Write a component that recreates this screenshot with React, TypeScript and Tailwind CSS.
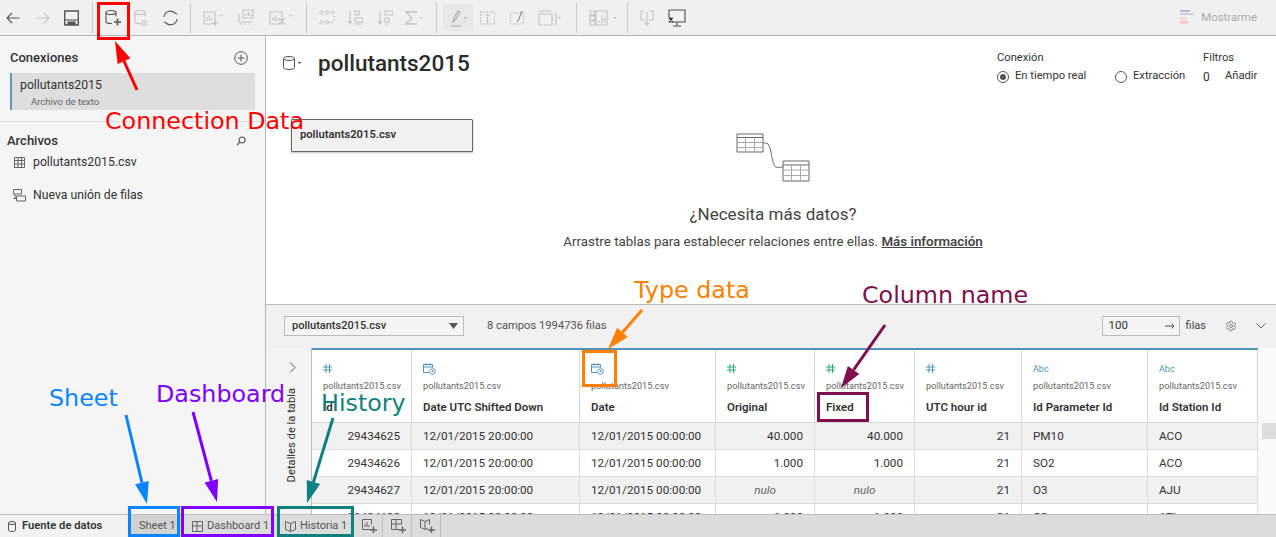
import { Settings } from "lucide-react";

const S = "#555555";
const L = "#c4c4c4";

function Ico({ w, ml, children, c = L }: { w: number; ml: string; children: React.ReactNode; c?: string }) {
  return (
    <div className={ml + " shrink-0"}>
      <svg width={w} height="20" viewBox={`0 0 ${w} 20`} fill="none" stroke={c} strokeWidth="1.1">
        {children}
      </svg>
    </div>
  );
}

function Db({ c = S }: { c?: string }) {
  return (
    <g stroke={c}>
      <ellipse cx="6" cy="4.500" rx="5" ry="2" />
      <path d="M1 4.500v9c0 1.200 2 2 5 2h1M11 4.500v4" />
    </g>
  );
}

function Toolbar() {
  return (
    <div className="h-[36px] shrink-0 flex items-center bg-[#f0f0f0] border-b border-[#b5b5b5]">
      <Ico w={14} ml="ml-[6px]" c={S}><path d="M13.500 10H1M6 5l-5 5 5 5" /></Ico>
      <Ico w={14} ml="ml-[16px]"><path d="M0.500 10H13M8 5l5 5-5 5" /></Ico>
      <Ico w={15} ml="ml-[14px]" c={S}>
        <path d="M.7 3h13.600v14H.700z" strokeWidth="1.400" /><path d="M1 12h13" /><path d="M4 17v-3h7v3" fill={S} />
      </Ico>
      <div className="w-px h-[30px] bg-[#c8c8c8] ml-[13px]" />
      <Ico w={16} ml="ml-[12px]">
        <Db /><path d="M9 14h7M12.500 10.500v7" stroke={S} strokeWidth="1.600" />
      </Ico>
      <Ico w={13} ml="ml-[13px]">
        <Db c={L} /><path d="M8.500 12v6M11.500 12v6" strokeWidth="1.500" />
      </Ico>
      <Ico w={15} ml="ml-[16px]" c={S}>
        <path d="M1 9a6.500 6.500 0 0 1 11-4l2 1M14 11a6.500 6.500 0 0 1-11 4l-2-1" />
      </Ico>
      <div className="w-px h-[30px] bg-[#c8c8c8] ml-[12px]" />
      <Ico w={20} ml="ml-[12px]">
        <path d="M1 4h11v12H1zM4 13V9M6.500 13V7M9 13v-3M9 15h7M12.500 11.500v7" />
        <path d="M17 7h3l-1.500 2z" fill={L} stroke="none" />
      </Ico>
      <Ico w={16} ml="ml-[15px]">
        <path d="M5 2h10v8H5zM1 6v8h14M8 8V5M10.500 8V4M13 8V6M2 16h2M6 16h2M10 16h2" />
      </Ico>
      <Ico w={24} ml="ml-[15px]">
        <path d="M1 4h12v12H1zM4 13V9M6.500 13V7M9 13v-3M10 10l6 6M16 10l-6 6" />
        <path d="M20 7h3l-1.500 2z" fill={L} stroke="none" />
      </Ico>
      <div className="w-px h-[30px] bg-[#c8c8c8] ml-[13px]" />
      <Ico w={16} ml="ml-[12px]">
        <path d="M1 3h3v3H1zM7 3h3v3H7zM12 3h3v3h-3zM1 13h3v3H1zM7 13h3v3H7zM15 8a5 5 0 0 1-3 7" strokeDasharray="2 1" />
      </Ico>
      <Ico w={16} ml="ml-[12px]">
        <path d="M3 3v13M1 13l2 3 2-3M8 3h4v4H8zM8 10h8v4H8zM8 16h8" />
      </Ico>
      <Ico w={16} ml="ml-[14px]">
        <path d="M3 3v13M1 13l2 3 2-3M8 3h8v4H8zM8 10h4v4H8zM8 16h3" />
      </Ico>
      <Ico w={18} ml="ml-[12px]">
        <path d="M12 4H1l6 6-6 6h11" strokeWidth="1.300" /><path d="M15 9h3l-1.500 2z" fill={L} stroke="none" />
      </Ico>
      <div className="w-px h-[30px] bg-[#c8c8c8] ml-[13px]" />
      <div className="ml-[6px] w-[30px] h-[27px] bg-[#e8e8e8] flex items-center pl-[7px]">
        <svg width="20" height="20" viewBox="0 0 20 20" fill="none" stroke="#aaa" strokeWidth="1.100">
          <path d="M3 14l1-4 4-7 2 1-4 7zM1 18h10" />
          <path d="M14 9h3l-1.500 2z" fill="#aaa" stroke="none" />
        </svg>
      </div>
      <Ico w={15} ml="ml-[7px]">
        <path d="M.5 4h14v12H.500z" strokeDasharray="2 1" /><path d="M5 7h5M7.500 7v7M6 14h3" />
      </Ico>
      <Ico w={14} ml="ml-[15px]">
        <path d="M.5 5h13v11H.500z" strokeDasharray="2 1" /><path d="M7 14l2-3 3-8" stroke="#888" />
      </Ico>
      <Ico w={24} ml="ml-[14px]">
        <path d="M1 3h13M1 6h13v11H1zM17 6h1M18 6v11M17 17h1" /><path d="M20 9h3l-1.500 2z" fill={L} stroke="none" />
      </Ico>
      <div className="w-px h-[30px] bg-[#c8c8c8] ml-[14px]" />
      <Ico w={28} ml="ml-[12px]">
        <path d="M1 3h5v4H1zM1 8h5v4H1zM1 13h5v4H1zM7 3h11v14H7zM10 15v-2M13 15V7M15.500 15v-5" />
        <path d="M24 9h4l-2 2z" fill={L} stroke="none" />
      </Ico>
      <div className="w-px h-[30px] bg-[#c8c8c8] ml-[10px]" />
      <Ico w={14} ml="ml-[12px]">
        <path d="M4 3H1v9h4M10 3h3v9h-4M7 4v13M4.500 14.500L7 17l2.500-2.500" />
      </Ico>
      <Ico w={18} ml="ml-[14px]" c={S}>
        <path d="M1 2h16v12H1M9 14v4M5 18h8M1 2v8" strokeWidth="1.200" /><path d="M1 10l4 4M1 10.500l4-.5M1 14l3-3" stroke="#222" />
      </Ico>
      <div className="ml-auto flex items-center mr-[19px]">
        <svg width="14" height="15" viewBox="0 0 14 15">
          <rect x="0" y="0" width="10" height="2" fill="#b9b6cf" />
          <rect x="0" y="3" width="14" height="2" fill="#c9d3e6" />
          <rect x="0" y="7" width="7" height="3" fill="#f3d9c6" />
          <rect x="0" y="11" width="8" height="3" fill="#f3c9c9" />
        </svg>
        <span className="ml-[7px] text-[11.4px] text-[#ababab]">Mostrarme</span>
      </div>
    </div>
  );
}

function Sidebar() {
  return (
    <aside className="w-[266px] shrink-0 bg-[#f5f5f5] border-r border-[#b5b5b5] flex flex-col">
      <div className="h-[86px] pl-[10px] pr-[10px] border-b border-[#dddddd]">
        <div className="h-[37px] pt-[7px] flex items-center justify-between pr-[7px]">
          <span className="text-[13px] font-medium text-[#333]">Conexiones</span>
          <svg width="14" height="14" viewBox="0 0 14 14" fill="none" stroke={S}>
            <circle cx="7" cy="7" r="6.300" />
            <path d="M3.500 7h7M7 3.500v7" />
          </svg>
        </div>
        <div className="h-[37px] bg-[#dedede] border-l-2 border-[#5a9bbd] pl-[8px] pt-[4px]">
          <div className="text-[12.25px] leading-[16px] text-[#333]">pollutants2015</div>
          <div className="text-[9.5px] leading-[14px] mt-[2px] pl-[11px] text-[#666]">Archivo de texto</div>
        </div>
      </div>
      <div className="h-[30px] pl-[7px] pr-[19px] pt-[8px] flex justify-between items-center">
        <span className="text-[13px] font-medium text-[#333]">Archivos</span>
        <svg width="10" height="10" viewBox="0 0 10 10" fill="none" stroke={S} strokeWidth="1.200">
          <circle cx="6" cy="4" r="3" /><path d="M3.800 6.200L1 9" />
        </svg>
      </div>
      <div className="h-[20px] pl-[14px] flex items-center gap-[8px]">
        <svg width="11" height="11" viewBox="0 0 11 11" fill="none" stroke="#666">
          <path d="M.5.500h10v10H.500zM.5 3.500h10M.5 7h10M4 .5v10M7.500 .5v10" />
        </svg>
        <span className="text-[12.25px] text-[#333]">pollutants2015.csv</span>
      </div>
      <div className="mt-[13px] h-[20px] pl-[13px] flex items-center gap-[7px]">
        <svg width="13" height="13" viewBox="0 0 13 13" fill="none" stroke="#666">
          <path d="M.5.500h8v4.500h-8zM3.500 7h9v5h-9zM.5 9.500h3M2 5v4.500" />
        </svg>
        <span className="text-[12.25px] text-[#333]">Nueva unión de filas</span>
      </div>
    </aside>
  );
}

function Canvas() {
  return (
    <div className="h-[268px] shrink-0 relative bg-white flex flex-col">
      <div className="flex items-start">
        <div className="ml-[16px] mt-[12px] flex items-center">
          <svg width="20" height="16" viewBox="0 0 20 16" fill="none" stroke={S}>
            <ellipse cx="7" cy="3.500" rx="5.500" ry="2" />
            <path d="M1.500 3.500v9c0 1 2.500 2 5.500 2s5.500-1 5.500-2v-9" />
            <path d="M15.500 7h4l-2 2z" fill={S} stroke="none" />
          </svg>
          <span className="ml-[16px] text-[22.5px] font-medium text-[#2b2b2b] leading-[30px]">pollutants2015</span>
        </div>
        <div className="ml-auto mt-[14px] flex">
          <div className="w-[206px] text-[11.2px] text-[#333]">
            <div className="h-[15px] leading-[15px]">Conexión</div>
            <div className="mt-[4px] flex items-center h-[15px]">
              <span className="w-[12px] h-[12px] rounded-full border border-[#555] flex items-center justify-center">
                <span className="w-[6px] h-[6px] rounded-full bg-[#555]" />
              </span>
              <span className="ml-[6px] w-[100px]">En tiempo real</span>
              <span className="w-[12px] h-[12px] rounded-full border border-[#555]" />
              <span className="ml-[6px]">Extracción</span>
            </div>
          </div>
          <div className="w-[73px] text-[11.2px] text-[#333]">
            <div className="h-[15px] leading-[15px]">Filtros</div>
            <div className="mt-[4px] flex items-center h-[15px]">
              <span className="w-[22px] text-[12px]">0</span>
              <span>Añadir</span>
            </div>
          </div>
        </div>
      </div>
      <div className="ml-[25px] mt-[35px] w-[182px] h-[33px] bg-[#f1f1f1] border border-[#666] rounded-[1px] shadow-[0_1px_2px_rgba(0,0,0,0.25)] flex items-center pl-[8px] text-[11.2px] font-semibold text-[#333]">
        pollutants2015.csv
      </div>
      <div className="absolute left-0 right-0 top-[97px] pl-[4px] flex flex-col items-center">
        <svg width="74" height="50" viewBox="0 0 74 50" fill="none" stroke="#666">
          <path d="M1 1h26v18H1zM1 4.500h26" />
          <path d="M1 9.500h26M1 14.500h26M9.500 4.500v14M18.500 4.500v14" stroke="#aaa" />
          <path d="M47 28h26v20H47zM47 32h26" />
          <path d="M47 37h26M47 42.500h26M55.500 32v16M64.500 32v16" stroke="#aaa" />
          <path d="M27 10h3c6 0 5 22 10 24 2 1 4 0 7 0" />
        </svg>
        <div className="mt-[21px] text-[17px] leading-[20px] text-[#444]">¿Necesita más datos?</div>
        <div className="mt-[9px] text-[13.35px] leading-[18px] text-[#444]">
          Arrastre tablas para establecer relaciones entre ellas.{" "}
          <span className="font-semibold underline">Más información</span>
        </div>
      </div>
    </div>
  );
}

function DataBar() {
  return (
    <div className="h-[44px] shrink-0 bg-[#f1f1f1] border-t border-[#bbbbbb] flex items-center pl-[18px] pb-[1px]">
      <div className="w-[180px] h-[20px] border border-[#bcbcbc] bg-[#f4f4f4] flex items-center justify-between pl-[7px] pr-[5px] text-[11px] font-medium text-[#333]">
        pollutants2015.csv
        <svg width="9" height="6" viewBox="0 0 9 6"><path d="M0 0h9L4.500 6z" fill={S} /></svg>
      </div>
      <span className="ml-[23px] text-[11.2px] text-[#555]">8 campos 1994736 filas</span>
      <div className="ml-auto w-[78px] h-[20px] border border-[#bcbcbc] bg-[#f4f4f4] flex items-center justify-between pl-[6px] pr-[4px] text-[11.5px] text-[#333]">
        100
        <svg width="10" height="8" viewBox="0 0 10 8" fill="none" stroke={S}><path d="M0 4h9M6.500 1.500L9 4 6.500 6.500" /></svg>
      </div>
      <span className="ml-[6px] text-[11px] text-[#444]">filas</span>
      <Settings className="ml-[19px]" size={12} color="#666" strokeWidth={1.5} />
      <svg className="ml-[19px] mr-[10px]" width="10" height="6" viewBox="0 0 10 6" fill="none" stroke="#666">
        <path d="M.5.500L5 5 9.500.5" />
      </svg>
    </div>
  );
}

function TypeIcon({ t }: { t: string }) {
  if (t === "abc") return <span className="text-[9px] leading-[16px] text-[#4f94b8]">Abc</span>;
  if (t === "date")
    return (
      <svg width="13" height="13" viewBox="0 0 13 13" fill="none" stroke="#4f94b8">
        <path d="M6 10.500H.5v-8h9v3M.5 5h9M3 1v2.500M7 1v2.500" />
        <circle cx="9.500" cy="9.500" r="2.800" />
        <path d="M9.500 8v1.500h1" />
      </svg>
    );
  const col = t === "green" ? "#2ba77a" : "#4f94b8";
  return (
    <svg width="9" height="9" viewBox="0 0 9 9" fill="none" stroke={col}>
      <path d="M3 0v9M6.500 0v9M0 3h9M0 6h9" />
    </svg>
  );
}

const GRID = "grid grid-cols-[100px_168px_136px_99px_100px_107px_126px_110px] w-[946px]";

const columns = [
  { t: "blue", name: "Id" },
  { t: "date", name: "Date UTC Shifted Down" },
  { t: "date", name: "Date" },
  { t: "green", name: "Original" },
  { t: "green", name: "Fixed" },
  { t: "blue", name: "UTC hour id" },
  { t: "abc", name: "Id Parameter Id" },
  { t: "abc", name: "Id Station Id" },
];

const rows = [
  ["29434625", "12/01/2015 20:00:00", "12/01/2015 00:00:00", "40.000", "40.000", "21", "PM10", "ACO"],
  ["29434626", "12/01/2015 20:00:00", "12/01/2015 00:00:00", "1.000", "1.000", "21", "SO2", "ACO"],
  ["29434627", "12/01/2015 20:00:00", "12/01/2015 00:00:00", "nulo", "nulo", "21", "O3", "AJU"],
  ["29434628", "12/01/2015 20:00:00", "12/01/2015 00:00:00", "1.000", "1.000", "21", "O3", "ATI"],
];

const aligns = ["right", "left", "left", "right", "right", "right", "left", "left"];

function DataGrid() {
  return (
    <div className="flex-1 min-h-0 flex overflow-hidden bg-white">
      <div className="w-[46px] shrink-0 bg-[#f3f3f3] border-r border-[#bdbdbd] flex flex-col items-center pl-[7px] pt-[14px]">
        <svg width="7" height="11" viewBox="0 0 7 11" fill="none" stroke={S}><path d="M1 .5L6 5.500 1 10.500" /></svg>
        <span className="mt-[15px] text-[11.2px] leading-[14px] text-[#333] [writing-mode:vertical-rl] rotate-180">
          Detalles de la tabla
        </span>
      </div>
      <div className="flex-1 min-w-0">
        <div className={GRID + " border-t-2 border-[#4f94b8]"}>
          {columns.map((c, i) => (
            <div key={i} className="h-[73px] border-r border-b border-[#d6d6d6] pl-[11px] flex flex-col">
              <div className="h-[17px] mt-[10px] flex items-center"><TypeIcon t={c.t} /></div>
              <div className="mt-[1px] h-[16px] text-[9.2px] leading-[16px] text-[#666]">pollutants2015.csv</div>
              <div className="mt-[6px] text-[11.5px] leading-[14px] font-semibold text-[#333]">{c.name}</div>
            </div>
          ))}
        </div>
        {rows.map((r, ri) => (
          <div key={ri} className={GRID + (ri % 2 === 0 ? " bg-[#f1f1f1]" : " bg-white")}>
            {r.map((v, i) => {
              const nulo = v === "nulo";
              return (
                <div
                  key={i}
                  className={
                    "h-[27px] pt-[1px] border-r border-b border-[#dcdcdc] flex items-center text-[11.7px] " +
                    (nulo
                      ? "justify-center italic text-[#666]"
                      : aligns[i] === "right"
                        ? "justify-end pr-[11px] text-[#333]"
                        : "pl-[11px] text-[#333]")
                  }
                >
                  {v}
                </div>
              );
            })}
          </div>
        ))}
      </div>
      <div className="w-[18px] shrink-0 relative bg-[#fafafa]">
        <div className="absolute right-0 top-[75px] w-[14px] h-[16px] bg-[#dddddd]" />
      </div>
    </div>
  );
}

function TabBar() {
  return (
    <div className="h-[23px] shrink-0 flex items-stretch bg-[#dcdcdc] border-t border-[#bdbdbd] text-[11px] text-[#555]">
      <div className="w-[131px] bg-[#f2f2f2] flex items-center pl-[8px] gap-[6px]">
        <svg width="8" height="11" viewBox="0 0 8 11" fill="none" stroke={S}>
          <ellipse cx="4" cy="2" rx="3.500" ry="1.500" />
          <path d="M.5 2v7c0 .8 1.500 1.500 3.500 1.500S7.500 9.800 7.500 9V2" />
        </svg>
        <span className="font-semibold text-[#333] text-[11.2px]">Fuente de datos</span>
      </div>
      <div className="w-[47px] bg-[#d2d2d2] flex items-center pl-[8px]">Sheet 1</div>
      <div className="w-[93px] ml-[3px] flex items-center pl-[11px] gap-[4px]">
        <svg width="11" height="11" viewBox="0 0 11 11" fill="none" stroke="#666">
          <path d="M.5.500h10v10H.500zM.5 5h10M5 .5v10" />
        </svg>
        Dashboard 1
      </div>
      <div className="w-[75px] ml-[5px] flex items-center pl-[6px] gap-[4px]">
        <svg width="11" height="11" viewBox="0 0 11 11" fill="none" stroke="#666">
          <path d="M5.500 2.500L.5.500v8l5 2 5-2v-8zM5.500 2.500v8" />
        </svg>
        Historia 1
      </div>
      <div className="w-[29px] border-r border-[#bdbdbd] flex items-center pl-[8px]">
        <svg width="15" height="14" viewBox="0 0 15 14" fill="none" stroke="#666">
          <path d="M9 10.500H.5V.5h9v5M3 8V5M5 8V3M7 8V6" />
          <path d="M8 11h7M11.500 7.500v6.500" strokeWidth="1.500" />
        </svg>
      </div>
      <div className="w-[29px] border-r border-[#bdbdbd] flex items-center pl-[8px]">
        <svg width="15" height="14" viewBox="0 0 15 14" fill="none" stroke="#666">
          <path d="M8 10.500H.5V.5h10v5M.5 5h10M5 .5v10" />
          <path d="M8 11h7M11.500 7.500v6.500" strokeWidth="1.500" />
        </svg>
      </div>
      <div className="w-[29px] border-r border-[#bdbdbd] flex items-center pl-[8px]">
        <svg width="15" height="14" viewBox="0 0 15 14" fill="none" stroke="#666">
          <path d="M5 2.500L.5.500v8l4.500 2 3-1M5 2.500L9.500.5v5M5 2.500v8" />
          <path d="M8 11h7M11.500 7.500v6.500" strokeWidth="1.500" />
        </svg>
      </div>
    </div>
  );
}

const notes = [
  { c: "#ff0000", x1: 137, y1: 90, x2: 115, y2: 41 },
  { c: "#ff8000", x1: 642, y1: 310, x2: 608, y2: 349 },
  { c: "#7f0f4f", x1: 885, y1: 325, x2: 841, y2: 388 },
  { c: "#0a84ff", x1: 126, y1: 415, x2: 147, y2: 504 },
  { c: "#8000ff", x1: 193, y1: 412, x2: 217, y2: 502 },
  { c: "#0f8080", x1: 333, y1: 418, x2: 307, y2: 503 },
];

// annotations drawn on top of the screenshot
function Annotations() {
  const label = "absolute whitespace-nowrap text-[23.8px] leading-[30px] font-['DejaVu_Sans',sans-serif] ";
  return (
    <>
      <svg className="absolute inset-0 pointer-events-none" width="1276" height="537">
        {notes.map((n, i) => {
          const a = Math.atan2(n.y2 - n.y1, n.x2 - n.x1);
          const len = 22;
          const hw = 7;
          const bx = n.x2 - Math.cos(a) * len;
          const by = n.y2 - Math.sin(a) * len;
          const px = -Math.sin(a) * hw;
          const py = Math.cos(a) * hw;
          return (
            <g key={i}>
              <line x1={n.x1} y1={n.y1} x2={bx} y2={by} stroke={n.c} strokeWidth="3" />
              <polygon points={`${n.x2},${n.y2} ${bx + px},${by + py} ${bx - px},${by - py}`} fill={n.c} />
            </g>
          );
        })}
      </svg>
      <div className="absolute left-[97px] top-[2px] w-[33px] h-[38px] border-[3px] border-[#ff0000]" />
      <div className="absolute left-[582px] top-[350px] w-[35px] h-[37px] border-[3px] border-[#ff8000]" />
      <div className="absolute left-[817px] top-[392px] w-[52px] h-[30px] border-[3px] border-[#7f0f4f]" />
      <div className="absolute left-[128px] top-[506px] w-[52px] h-[31px] border-[3px] border-[#0a84ff]" />
      <div className="absolute left-[181px] top-[506px] w-[93px] h-[31px] border-[3px] border-[#8000ff]" />
      <div className="absolute left-[277px] top-[506px] w-[77px] h-[31px] border-[3px] border-[#0f8080]" />
      <span className={label + "left-[105px] top-[106px] text-[#ff0000]"}>Connection Data</span>
      <span className={label + "left-[634px] top-[275px] text-[#ff8000]"}>Type data</span>
      <span className={label + "left-[862px] top-[280px] text-[#7f0f4f]"}>Column name</span>
      <span className={label + "left-[49px] top-[383px] text-[#0a84ff]"}>Sheet</span>
      <span className={label + "left-[156px] top-[379px] text-[#8000ff]"}>Dashboard</span>
      <span className={label + "left-[321px] top-[388px] text-[#0f8080]"}>History</span>
    </>
  );
}

export default function App() {
  return (
    <div className="relative w-[1276px] h-[537px] overflow-hidden flex flex-col bg-white font-['Roboto',sans-serif]">
      <Toolbar />
      <div className="flex-1 min-h-0 flex">
        <Sidebar />
        <main className="flex-1 min-w-0 flex flex-col">
          <Canvas />
          <DataBar />
          <DataGrid />
        </main>
      </div>
      <TabBar />
      <Annotations />
    </div>
  );
}
